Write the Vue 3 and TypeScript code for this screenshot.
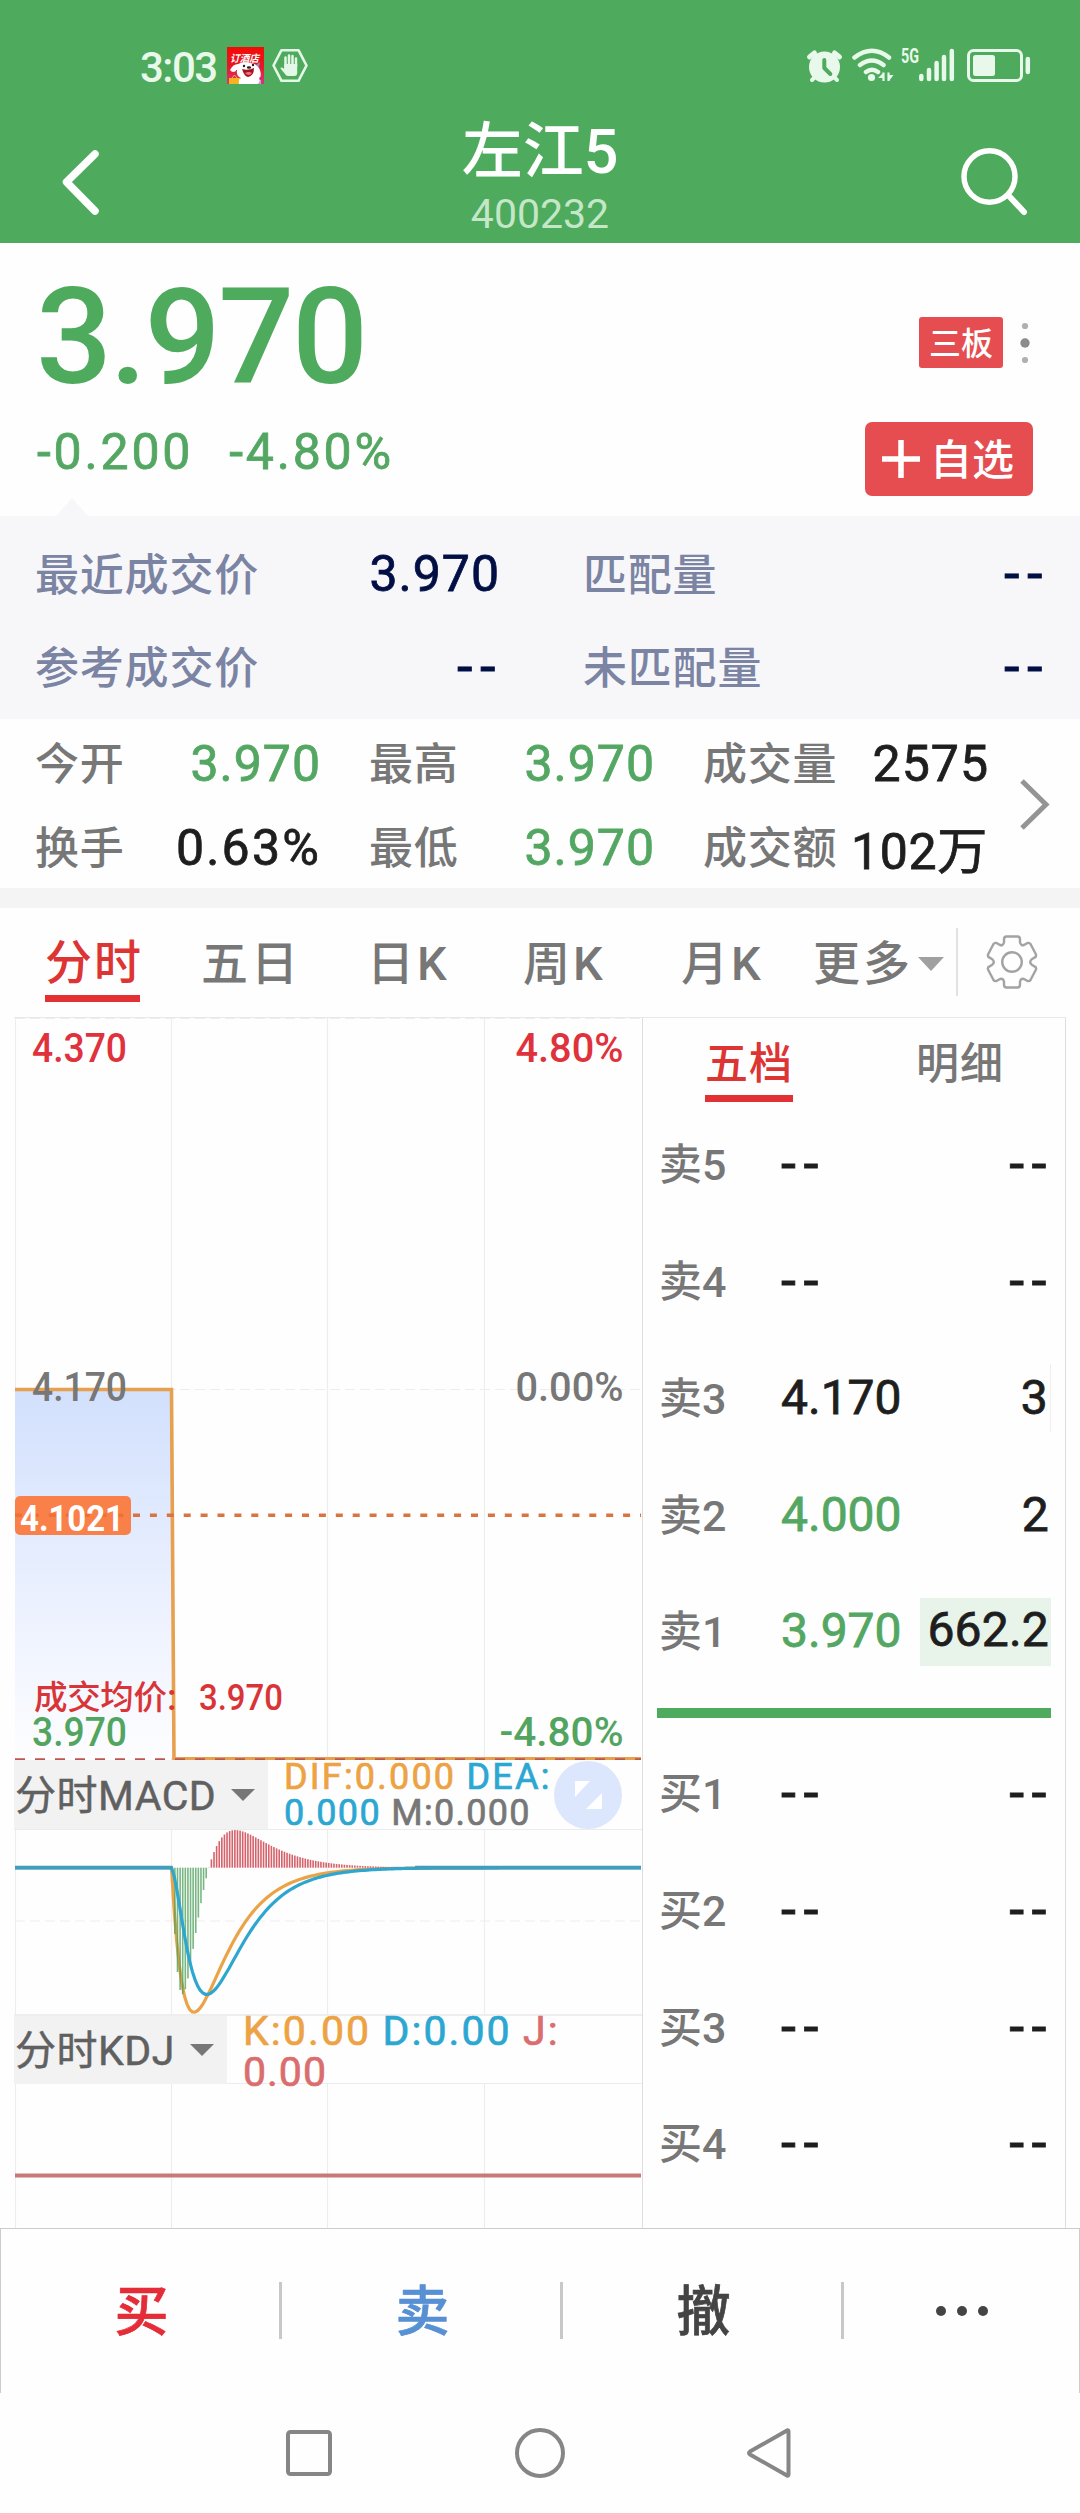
<script setup lang="ts">
interface Quote { label: string; value: string; tone?: string }
interface Level { label: string; price: string; volume: string; tone?: string; mark?: string }

const auction: Quote[] = [
  { label: '最近成交价', value: '3.970' },
  { label: '匹配量', value: '--' },
  { label: '参考成交价', value: '--' },
  { label: '未匹配量', value: '--' },
]

const stats: Quote[] = [
  { label: '今开', value: '3.970', tone: 'down' },
  { label: '最高', value: '3.970', tone: 'down' },
  { label: '成交量', value: '2575' },
  { label: '换手', value: '0.63%', tone: 'loose' },
  { label: '最低', value: '3.970', tone: 'down' },
  { label: '成交额', value: '102万', tone: 'mixed' },
]

const asks: Level[] = [
  { label: '卖5', price: '--', volume: '--' },
  { label: '卖4', price: '--', volume: '--' },
  { label: '卖3', price: '4.170', volume: '3', mark: 'thin' },
  { label: '卖2', price: '4.000', volume: '2', tone: 'down' },
  { label: '卖1', price: '3.970', volume: '662.2', tone: 'down', mark: 'wide' },
]

const bids: Level[] = ['买1', '买2', '买3', '买4'].map((label) => ({ label, price: '--', volume: '--' }))

// MACD(12, 26, 9) of a single price step after the first hour of trading
const STEP = 2.608
const SCALE = 2600
const ZERO = 37.7
const STEP_AT = 60
const POINTS = 240

const dif: number[] = []
const dea: number[] = []
for (let i = 0; i <= POINTS; i++) {
  const n = Math.max(0, i - STEP_AT)
  const d = 0.2 * (Math.pow(11 / 13, n) - Math.pow(25 / 27, n))
  dif.push(d)
  dea.push(i === 0 ? d : dea[i - 1] * 0.8 + d * 0.2)
}
const toPoints = (values: number[]) =>
  values.map((v, i) => `${(i * STEP).toFixed(1)},${(ZERO - v * SCALE).toFixed(1)}`).join(' ')
const difPoints = toPoints(dif)
const deaPoints = toPoints(dea)
const bars = dif
  .map((d, i) => ({ x: i * STEP, h: 2 * (d - dea[i]) * SCALE }))
  .filter((b) => Math.abs(b.h) > 0.25)
const gridX = [0.5, 156.5, 312.5, 469.5]
</script>

<template>
  <div class="app">
    <header class="top">
      <div class="status">
        <div class="status-left">
          <span class="clock">3:03</span>
          <svg class="promo" width="37" height="37" viewBox="0 0 37 37">
            <defs>
              <linearGradient id="promoBg" x1="0" y1="0" x2="0" y2="1">
                <stop offset="0" stop-color="#f40b05" /><stop offset="0.5" stop-color="#e61623" /><stop offset="1" stop-color="#d8357c" />
              </linearGradient>
            </defs>
            <rect width="37" height="37" fill="url(#promoBg)" />
            <rect x="2" y="31" width="11" height="6" fill="#f5b320" />
            <path d="M5 31l2.5-3 2.500 3" fill="none" stroke="#f5b320" />
            <rect x="28" y="33" width="6" height="4" fill="#b9a1ee" />
            <path d="M3 23q3-6 8-6q5-3 12-1q7 0 10 7q2 7-1 8q2 4-2 6H12q-1-5 2-6q-5-2-4-8q-4 4-7 0z" fill="#fff" />
            <path d="M29 18l4-3-1 5z" fill="#8a8ed9" />
            <path d="M15 22q6 2 12-1q0 8-6 9q-4-1-6-8z" fill="#a51420" />
            <path d="M18 26q4-2 7 0q-3 4-7 0z" fill="#ff6b78" />
            <circle cx="17" cy="19" r="1.200" fill="#222" /><ellipse cx="22" cy="20.500" rx="2.200" ry="1.300" fill="#222" /><circle cx="26" cy="18" r="1.200" fill="#222" />
            <text x="3" y="15" font-size="10" font-style="italic" font-weight="700" fill="#fff" textLength="29" lengthAdjust="spacingAndGlyphs">订酒店</text>
          </svg>
          <svg class="hand" width="36" height="36" viewBox="0 0 36 36">
            <path d="M9.500 2.200h17l8 15.300-8 15.300h-17l-8-15.300z" fill="none" stroke="#e4f8e7" stroke-width="2.600" stroke-linejoin="round" />
            <path d="M13.500 20V9.500M17 17V7.500M20.500 17V8M24 18V10.500" stroke="#e4f8e7" stroke-width="2.500" stroke-linecap="round" />
            <path d="M12.300 16H25.200V25q0 3-3 3H16q-2 0-3-2L8.500 20.500q0-1.500 1.600-1l2.200 1.500z" fill="#e4f8e7" />
          </svg>
        </div>
        <svg class="status-right" width="226" height="40" viewBox="805 45 226 40">
          <g fill="none" stroke="#e8f8ea" stroke-linecap="round">
            <circle cx="824.500" cy="67" r="15.500" fill="#e8f8ea" stroke="none" />
            <path d="M809.500 57l5-4M839.500 57l-5-4" stroke-width="5" />
            <path d="M815 77l-3 3M834 77l3 3" stroke-width="4" />
            <path d="M824.300 60v8l6 6" stroke="#4faa5d" stroke-width="4" stroke-linejoin="round" />
            <path d="M854.500 57.500Q872 44 889 57.500M860 65Q872 56 883.500 65M866 72Q872 67.500 878 72" stroke-width="4.500" />
            <circle cx="871.500" cy="77.500" r="3.600" fill="#e8f8ea" stroke="none" />
            <path d="M883.500 72.500v8.500M888.500 72.500v8.500" stroke-width="2.200" stroke-linecap="butt" />
            <path d="M883 73l-5 5h5zM889 81l4.500-6H889z" fill="#e8f8ea" stroke="none" />
            <path d="M921.300 76v3M929 70v9M936.600 63v16M944 57v22M951.800 51v28" stroke-width="4.500" />
            <rect x="968.500" y="50.500" width="53" height="30" rx="5" stroke-width="3" />
            <rect x="973" y="55" width="22" height="21" rx="2.500" fill="#e8f8ea" stroke="none" />
            <path d="M1027.800 59v13" stroke-width="4.500" />
          </g>
          <text x="901" y="62.500" font-size="20" font-weight="700" fill="#e8f8ea" textLength="18" lengthAdjust="spacingAndGlyphs">5G</text>
        </svg>
      </div>
      <nav class="title-bar">
        <svg width="44" height="74" viewBox="0 0 44 74"><path d="M35 9L6.500 37 35 66" fill="none" stroke="#fff" stroke-width="7.500" stroke-linecap="round" stroke-linejoin="round" /></svg>
        <div class="titles"><h1>左江5</h1><p>400232</p></div>
        <svg width="72" height="74" viewBox="0 0 72 74"><g fill="none" stroke="#fff"><ellipse cx="30.500" cy="31.500" rx="25.500" ry="25.700" stroke-width="5.500" /><path d="M50 51l15 16" stroke-width="6" stroke-linecap="round" /></g></svg>
      </nav>
    </header>

    <section class="price">
      <div class="price-left">
        <strong class="last">3.970</strong>
        <div class="change"><span>-0.200</span><span>-4.80%</span></div>
      </div>
      <div class="price-right">
        <div class="board">
          <span class="tag">三板</span>
          <svg width="12" height="44" viewBox="0 0 12 44"><circle cx="6" cy="5" r="3.100" fill="#b0b0b0" /><circle cx="6" cy="22" r="4.700" fill="#8c8c8c" /><circle cx="6" cy="39" r="3.100" fill="#b0b0b0" /></svg>
        </div>
        <button class="watch">
          <svg width="38" height="38" viewBox="0 0 38 38"><path d="M19 0v38M0 19h38" stroke="#fff" stroke-width="5.500" /></svg><span>自选</span>
        </button>
      </div>
      <i class="notch"></i>
    </section>

    <section class="auction">
      <div v-for="q in auction" :key="q.label" class="pair">
        <span>{{ q.label }}</span><b :class="{ dash: q.value === '--' }">{{ q.value }}</b>
      </div>
    </section>

    <section class="stats">
      <div class="stats-grid">
        <div v-for="q in stats" :key="q.label" class="pair">
          <span>{{ q.label }}</span><b :class="q.tone">{{ q.value }}</b>
        </div>
      </div>
      <svg width="34" height="56" viewBox="0 0 34 56"><path d="M2 5L26 28.500 2 52" fill="none" stroke="#949494" stroke-width="5" /></svg>
    </section>

    <nav class="tabs">
      <span class="tab active">分时</span>
      <span class="tab">五日</span>
      <span class="tab">日K</span>
      <span class="tab">周K</span>
      <span class="tab">月K</span>
      <span class="tab more">更多<svg width="26" height="14" viewBox="0 0 26 14"><path d="M0 0h26L13 14z" fill="#a0a0a0" /></svg></span>
      <span class="gear">
        <svg width="54" height="56" viewBox="-27 -28 54 56"><g fill="none" stroke="#a3a3a3" stroke-width="2.400" stroke-linejoin="round">
          <circle r="9.800" />
          <path d="M-8-22.500Q-8-25.500-5.500-25.500H5.500Q8-25.500 8-22.500V-19.500Q9-16 12-17L15.500-19Q17.500-19.500 18.500-18L24-7.500Q24.500-5 22.500-4.500L19.500-2.500Q17 0 19.500 2.500L22.500 4.500Q24.500 5 24 7.500L18.500 18Q17.500 19.500 15.500 19L12 17Q9 16 8 19.500V22.500Q8 25.500 5.500 25.500H-5.500Q-8 25.500-8 22.500V19.500Q-9 16-12 17L-15.500 19Q-17.500 19.500-18.500 18L-24 7.500Q-24.500 5-22.500 4.500L-19.500 2.500Q-17 0-19.500-2.500L-22.500-4.500Q-24.500-5-24-7.500L-18.500-18Q-17.500-19.500-15.500-19L-12-17Q-9-16-8-19.500Z" />
        </g></svg>
      </span>
    </nav>

    <main class="body">
      <div class="charts">
        <svg class="chart" width="627" height="743" viewBox="15 1017 627 743">
          <defs>
            <linearGradient id="areaFill" x1="0" y1="0" x2="0" y2="1"><stop offset="0" stop-color="#d2e0fd" /><stop offset="1" stop-color="#fdfdff" /></linearGradient>
          </defs>
          <g stroke="#ededed" stroke-width="1.200">
            <path v-for="x in gridX" :key="x" :d="`M${x + 15} 1018V1760`" />
            <path d="M15 1018.500H641M15 1389.500H641" stroke-dasharray="10 5" />
          </g>
          <path d="M15 1389H172L174 1758H15z" fill="url(#areaFill)" />
          <path d="M15 1389.500H171.500L174 1758.700H641" fill="none" stroke="#e7a04d" stroke-width="3.600" />
          <path d="M15 1759.500H641" stroke="#bd5550" stroke-width="2.600" stroke-dasharray="10 10" />
          <path d="M133 1515.300H641" stroke="#d9733f" stroke-width="3.600" stroke-dasharray="7 9.900" />
          <rect x="15" y="1496" width="116" height="39" rx="5" fill="#fa8049" />
          <path d="M15 1515.300H131" stroke="#ee6f38" stroke-width="3.600" stroke-dasharray="7 9.900" />
          <g font-size="41.500">
            <text x="32" y="1062" fill="#df323c" textLength="95" lengthAdjust="spacingAndGlyphs">4.370</text>
            <text x="515.500" y="1062" fill="#df323c" textLength="108" lengthAdjust="spacingAndGlyphs">4.80%</text>
            <text x="32" y="1401" fill="#777" textLength="95" lengthAdjust="spacingAndGlyphs">4.170</text>
            <text x="515.500" y="1401" fill="#777" textLength="108" lengthAdjust="spacingAndGlyphs">0.00%</text>
            <text x="32" y="1746" fill="#52a560" textLength="95" lengthAdjust="spacingAndGlyphs">3.970</text>
            <text x="499.500" y="1746" fill="#52a560" textLength="124" lengthAdjust="spacingAndGlyphs">-4.80%</text>
            <text x="20" y="1531" font-size="37" font-weight="700" fill="#fff" textLength="104" lengthAdjust="spacingAndGlyphs">4.1021</text>
            <text x="34" y="1709" font-size="33.500" fill="#d93438" textLength="133">成交均价</text>
            <text x="167" y="1709.500" font-size="36" fill="#d93438">:</text>
            <text x="199" y="1709.500" font-size="36" fill="#d93438" textLength="84" lengthAdjust="spacingAndGlyphs">3.970</text>
          </g>
        </svg>

        <div class="indicator">
          <div class="picker"><span>分时MACD</span><svg width="24" height="12" viewBox="0 0 24 12"><path d="M0 0h24L12 12z" fill="#777" /></svg></div>
          <p class="legend macd"><span class="o wider">DIF:0.000</span> <span class="b wider">DEA:</span><br><span class="b">0.000</span> <span class="g">M:0.000</span></p>
          <svg class="expand" width="68" height="68" viewBox="0 0 68 68"><circle cx="34" cy="34" r="34" fill="#dce6fd" /><path d="M21 20h15L21 36zM48 32v16H32z" fill="#fff" /></svg>
        </div>
        <svg class="chart" width="627" height="184" viewBox="0 0 627 184">
          <g stroke="#ededed" stroke-width="1.200">
            <path v-for="x in gridX" :key="x" :d="`M${x} 0V184`" />
            <path d="M0 91H626" stroke-dasharray="10 5" />
          </g>
          <polyline :points="difPoints" fill="none" stroke="#eba347" stroke-width="3.200" />
          <rect v-for="b in bars" :key="b.x" :x="b.x" :y="b.h > 0 ? ZERO - b.h : ZERO" width="1.600" :height="Math.abs(b.h)" :fill="b.h > 0 ? '#d0505a' : '#4b9f58'" :opacity="b.h > 0 ? 0.9 : 0.75" />
          <polyline :points="deaPoints" fill="none" stroke="#2ea6cf" stroke-width="3.200" />
          <path d="M0 37.700H157M400 37.700H626" stroke="#3d9fbd" stroke-width="3.800" />
        </svg>
        <div class="indicator kdj">
          <div class="picker"><span>分时KDJ</span><svg width="24" height="12" viewBox="0 0 24 12"><path d="M0 0h24L12 12z" fill="#777" /></svg></div>
          <p class="legend"><span class="o wider">K:0.00</span> <span class="b wider">D:0.00</span> <span class="r wider">J:</span><br><span class="r">0.00</span></p>
        </div>
        <svg class="chart" width="627" height="145" viewBox="0 0 627 145">
          <path v-for="x in gridX" :key="x" :d="`M${x} 0V145`" stroke="#ededed" stroke-width="1.200" />
          <path d="M0 91.500H626" stroke="#c87976" stroke-width="4" />
        </svg>
      </div>

      <aside class="book">
        <div class="book-tabs"><span class="active">五档</span><span>明细</span></div>
        <div v-for="l in asks" :key="l.label" class="level">
          <span class="name">{{ l.label }}</span>
          <b :class="[l.tone, { dash: l.price === '--' }]">{{ l.price }}</b>
          <b :class="['vol', l.mark, { dash: l.volume === '--' }]">{{ l.volume }}</b>
        </div>
        <div class="spread"></div>
        <div v-for="l in bids" :key="l.label" class="level">
          <span class="name">{{ l.label }}</span>
          <b class="dash">{{ l.price }}</b>
          <b class="vol dash">{{ l.volume }}</b>
        </div>
      </aside>
    </main>

    <footer class="actions">
      <span class="buy">买</span>
      <span class="sell">卖</span>
      <span class="cancel">撤</span>
      <span><svg width="54" height="12" viewBox="0 0 54 12"><g fill="#444"><circle cx="6" cy="6" r="5" /><circle cx="27" cy="6" r="5" /><circle cx="48" cy="6" r="5" /></g></svg></span>
    </footer>

    <nav class="system">
      <svg width="50" height="54" viewBox="0 0 50 54"><rect x="4" y="6" width="42" height="42" rx="2.500" fill="none" stroke="#868686" stroke-width="4" /></svg>
      <svg width="54" height="54" viewBox="0 0 54 54"><circle cx="27" cy="27" r="23" fill="none" stroke="#868686" stroke-width="4" /></svg>
      <svg width="50" height="54" viewBox="0 0 50 54"><path d="M4 25.500L41 4.500q1.500-.5 1.500 1V48.500q0 1.500-1.500 1L4 28.500q-2-1.500 0-3z" fill="none" stroke="#868686" stroke-width="4" stroke-linejoin="round" /></svg>
    </nav>
  </div>
</template>

<style>
body { margin: 0; background: #fefefe; }
</style>

<style scoped>
.app {
  width: 1080px;
  height: 2513px;
  overflow: hidden;
  background: #fefefe;
  color: #1e1e1e;
  font-family: Roboto, "Noto Sans CJK SC", sans-serif;
  font-weight: 500;
  display: flex;
  flex-direction: column;
}
.app * { box-sizing: border-box; }
svg { display: block; flex: none; }
h1, p { margin: 0; font-weight: inherit; }
b, strong { font-weight: 400; -webkit-text-stroke: 0.8px currentColor; }
.down { color: #53a762; }

.top { height: 243px; background: #4eaa5d; color: #fff; flex: none; }
.status { height: 116px; padding: 45px 49px 0 140px; display: flex; justify-content: space-between; align-items: flex-start; }
.status-left { display: flex; align-items: flex-start; }
.clock { width: 87px; font-size: 42px; line-height: 45px; color: #e8f8ea; letter-spacing: -1.5px; }
.promo { margin-top: 2px; }
.hand { margin: 3px 0 0 8px; }
.title-bar { height: 127px; padding: 0 49px 0 60px; display: flex; justify-content: space-between; }
.title-bar > svg { margin-top: 29px; }
.titles { padding-left: 17px; text-align: center; }
h1 { font-size: 61px; line-height: 72px; }
.titles p { margin-top: 6px; font-size: 41px; line-height: 41px; font-weight: 400; color: #c3e7c7; }

.price { position: relative; height: 273px; padding: 0 47px 0 37px; display: flex; justify-content: space-between; flex: none; }
.last { display: block; margin-top: 30px; font-size: 134px; line-height: 130px; color: #4eaa5d; letter-spacing: -2.400px; margin-left: -1px; font-weight: 500; -webkit-text-stroke: 0; }
.change { margin-top: 19px; display: flex; gap: 36px; font-size: 50px; line-height: 60px; color: #53a762; letter-spacing: 2.800px; font-weight: 400; -webkit-text-stroke: 0.8px currentColor; }
.price-right { display: flex; flex-direction: column; align-items: flex-end; }
.board { margin-top: 74px; display: flex; align-items: center; gap: 16px; margin-right: 2px; }
.tag { width: 84px; height: 51px; border-radius: 3px; background: #e54d50; color: #fff; font-size: 32px; line-height: 54px; text-align: center; }
.watch { margin-top: 54px; width: 168px; height: 74px; border: 0; border-radius: 7px; background: #e54d50; color: #fff; font: inherit; font-size: 42px; line-height: 74px; display: flex; align-items: center; gap: 10px; padding: 0 0 0 17px; }
.watch span { padding-top: 4px; }
.notch { position: absolute; left: 56px; bottom: 0; border: 16px solid transparent; border-top: 0; border-bottom: 18px solid #f7f7fa; }

.pair { display: flex; justify-content: space-between; align-items: center; }
.pair span { font-size: 44px; line-height: 52px; letter-spacing: 0.8px; white-space: nowrap; margin: 2px 0 0 -1px; }
.pair b { font-size: 50px; letter-spacing: 1px; margin-right: -3px; }
.pair b.dash { font-size: 56px; letter-spacing: 7.5px; margin-right: -6px; }
.auction { height: 203px; background: #f7f7fa; padding: 11px 36px 6px; display: grid; grid-template-columns: 461px 460px; column-gap: 87px; grid-auto-rows: 93px; flex: none; }
.auction .pair span { color: #7b84a3; margin-top: 5px; }
.auction .pair b { color: #020f45; }
.stats { height: 189px; border-bottom: 20px solid #f4f4f4; padding: 3px 0 0 36px; display: flex; align-items: flex-start; flex: none; }
.stats-grid { width: 950px; display: grid; grid-template-columns: repeat(3, 282px); column-gap: 52px; grid-auto-rows: 84px; }
.stats .pair span { color: #777; }
.stats .pair b.mixed { letter-spacing: 0.700px; margin: -3px -2px 0 -8px; }
.stats .pair b.loose { letter-spacing: 2.200px; }
.stats > svg { margin: 54px 0 0 34px; }

.tabs { height: 109px; flex: none; padding-left: 43px; display: grid; grid-template-columns: 158px 166px 156px 158px 132px 145px 1fr; align-items: center; font-size: 47px; color: #777; line-height: 60px; white-space: nowrap; }
.tab { display: flex; align-items: center; letter-spacing: 3px; height: 100%; padding-top: 2px; }
.tab.active { color: #dd3434; width: 95px; height: 94px; margin-left: 2px; border-bottom: 7px solid #e33033; padding-top: 23px; letter-spacing: 2px; align-self: start; }
.more { gap: 5px; }
.gear { height: 68px; margin-top: -1px; border-left: 2px solid #e2e2e2; padding-left: 27px; display: flex; align-items: center; margin-left: -2px; }

.body { height: 1211px; flex: none; margin: 0 14px; border-top: 1px solid #e8e8e8; display: flex; }
.charts { width: 628px; margin-top: -1px; flex: none; }
.chart { margin-left: 1px; }
.indicator { height: 70px; display: flex; border-bottom: 1px solid #ececec; }
.picker { width: 254px; height: 69px; background: #f2f2f2; color: #606060; font-size: 41px; line-height: 67px; display: flex; align-items: center; gap: 15px; white-space: nowrap; padding-left: 1px; }
.picker span { letter-spacing: 0.500px; font-weight: 400; padding-top: 4px; -webkit-text-stroke: 0.5px currentColor; }
.legend { margin-left: 16px; font-size: 36px; line-height: 36px; font-weight: 400; white-space: nowrap; letter-spacing: 1.3px; width: 270px; height: 69px; -webkit-text-stroke: 0.7px currentColor; margin-top: -1px; }
.macd .wider { letter-spacing: 2.200px; }
.expand { margin-top: 1px; }
.o { color: #eda244; }
.b { color: #2ba7d2; }
.g { color: #777; }
.r { color: #da6d6d; }
.kdj { border-top: 2px solid #eee; }
.kdj .picker { width: 213px; height: 68px; }
.kdj .picker span { padding-top: 2px; }
.kdj .legend { font-size: 41px; line-height: 41px; letter-spacing: 1px; margin-top: -5px; }
.kdj .wider { letter-spacing: 2.100px; }
.book { width: 424px; border: solid #dedede; border-width: 0 1px; padding: 0 14px; }
.book-tabs { height: 88px; padding: 8px 47px 0 48px; display: flex; justify-content: space-between; align-items: flex-start; color: #777; font-size: 43px; }
.book-tabs span { letter-spacing: 1px; line-height: 76px; height: 76px; }
.book-tabs .active { width: 88px; border-bottom: 7px solid #e33033; color: #dd3434; text-align: center; }
.level { height: 116.75px; display: grid; grid-template-columns: 124px 139px 131px; align-items: center; }
.name { color: #777; font-size: 43px; line-height: 60px; padding-left: 2px; margin-top: 2px; }
.level b { font-size: 48px; line-height: 68px; letter-spacing: 0; white-space: nowrap; }
.level b.dash { font-size: 54px; letter-spacing: 7.5px; margin: 0; }
.level .vol { text-align: right; padding-right: 2px; letter-spacing: 0.2px; }
.level b.vol.wide { margin-top: 2px; line-height: 64px; padding-bottom: 4px; }
.level b.vol.dash { padding: 0; margin-right: -3px; letter-spacing: 7.5px; }
.thin { border-right: 1px solid #eee; }
.wide { background: #e8f3ea; }
.spread { margin: 18px 0 17px; height: 10px; background: #4eaa5d; }

.actions { height: 165px; flex: none; border: solid #ccc; border-width: 1px 1px 0; display: grid; grid-template-columns: 281px 281px 281px 1fr; font-size: 54px; color: #444; }
.actions span { height: 57px; margin-top: 53px; line-height: 53px; display: flex; align-items: center; justify-content: center; border-right: 3px solid #c8c8c8; padding-left: 3px; -webkit-text-stroke: 0.7px currentColor; }
.actions .buy, .actions .sell, .actions .cancel { padding-top: 4px; }
.actions span:last-child { border: 0; padding-left: 0; }
.actions .buy { color: #e42d38; }
.actions .sell { color: #5790d3; }
.system { flex: 1; display: flex; justify-content: center; gap: 179px; padding-top: 33px; }
</style>
